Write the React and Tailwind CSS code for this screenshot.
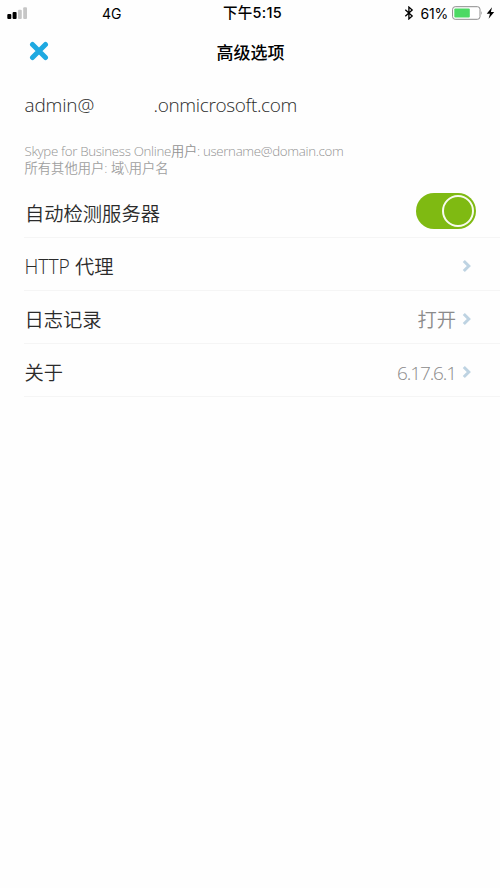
const rows = [
  { label: 'HTTP 代理', value: '' },
  { label: '日志记录', value: '打开' },
  { label: '关于', value: '6.17.6.1' },
];

function StatusBar() {
  return (
    <div className="grid h-[26px] grid-cols-3 items-center font-['Inter','Noto_Sans_CJK_SC',sans-serif] text-[14px] text-black">
      <div className="flex items-center">
        <svg className="ml-[7px]" width="20" height="13" viewBox="0 0 20 13">
          <rect x="0.3" y="7" width="4" height="5" rx="1" fill="#000" />
          <rect x="5.6" y="5" width="4" height="7" rx="1" fill="#000" />
          <rect x="11" y="2.8" width="3.8" height="9.2" rx="1" fill="#c6c6c6" />
          <rect x="16.2" y="0.3" width="3.8" height="11.7" rx="1" fill="#c6c6c6" />
        </svg>
        <span className="ml-[75px]">4G</span>
      </div>
      <span className="ml-[5px] text-center text-[14.5px] font-medium tracking-[0.3px] whitespace-nowrap">下午5:15</span>
      <div className="flex items-center justify-end pr-[5px]">
        <svg width="10" height="14" viewBox="0 0 10 14" fill="none" stroke="#000" strokeWidth="1.3">
          <path d="M1.3 3.8 8.2 10 4.9 12.9V1.1L8.2 4 1.3 10.2" />
        </svg>
        <span className="ml-[6px] tracking-[-0.2px]">61%</span>
        <svg className="ml-[4px]" width="31" height="14" viewBox="0 0 31 14">
          <rect x="0.6" y="0.7" width="27.4" height="12.6" rx="2.6" fill="#fff" stroke="#8c8c8c" strokeWidth="1" />
          <rect x="2.3" y="2.4" width="15.5" height="9.2" rx="1" fill="#4cd964" />
          <path d="M29.3 5q1.5 2 0 4z" fill="#8c8c8c" />
        </svg>
        <svg className="ml-[3px]" width="9" height="12" viewBox="0 0 9 12">
          <path d="M6 0.2 0.7 6.8H4L2.6 11.8 8.2 5H4.9z" fill="#000" />
        </svg>
      </div>
    </div>
  );
}

function Chevron() {
  return (
    <svg className="mb-1 ml-[6px]" width="10" height="14" viewBox="0 0 10 14" fill="none" stroke="#bed3e2" strokeWidth="3">
      <path d="M1.8 2 6.8 7 1.8 12" />
    </svg>
  );
}

function Toggle() {
  return (
    <div className="mb-[7px] flex h-9 w-[60px] items-center justify-end rounded-full bg-[#7fba12] pr-[2px]">
      <div className="size-8 rounded-full border-[2.5px] border-[#f8fbee]" />
    </div>
  );
}

export default function App() {
  return (
    <div className="h-[888px] w-[500px] overflow-hidden bg-[#fefefe] font-['Open_Sans','Noto_Sans_CJK_SC',sans-serif] text-[#2b2b2b]">
      <StatusBar />

      <header className="grid h-[52px] grid-cols-3 items-center">
        <svg className="mb-[2px] ml-[29px]" width="20" height="20" viewBox="0 0 20 20" stroke="#1ea9e1" strokeWidth="5" strokeLinecap="round">
          <path d="M3.5 3.5 16.5 16.5M16.5 3.5 3.5 16.5" />
        </svg>
        <h1 className="mt-px ml-px text-center text-[17px] leading-6 font-medium text-black">高级选项</h1>
      </header>

      <main>
        <div className="mt-3 flex h-[30px] items-center pl-[24.5px] text-[19px] font-[350]">
          <span className="w-[129px] tracking-[-0.15px]">admin@</span>
          <span className="tracking-[-0.35px]">.onmicrosoft.com</span>
        </div>

        <div className="mt-[23px] pl-[24.5px] text-[13.3px] leading-[17px] font-[350] text-[#a0a0a0]">
          <p className="tracking-[-0.32px] whitespace-nowrap text-[#939393]">Skype for Business Online用户: username@domain.com</p>
          <p>所有其他用户: 域\用户名</p>
        </div>

        <ul className="mt-[8px] pl-6 text-[19.3px] font-[350]">
          <li className="flex h-[53px] items-center justify-between border-b border-[#f5f5f5] pt-[7px] pr-6">
            <span className="pl-px">自动检测服务器</span>
            <Toggle />
          </li>
          {rows.map(({ label, value }) => (
            <li key={label} className="flex h-[53px] items-center justify-between border-b border-[#f5f5f5] pt-[7px] pr-7">
              <span className="pl-[0.5px]">{label}</span>
              <div className="flex items-center text-[#8b8b8b]">
                <span className={/\d/.test(value) ? 'text-[19px] tracking-[-1.1px]' : ''}>{value}</span>
                <Chevron />
              </div>
            </li>
          ))}
        </ul>
      </main>
    </div>
  );
}
